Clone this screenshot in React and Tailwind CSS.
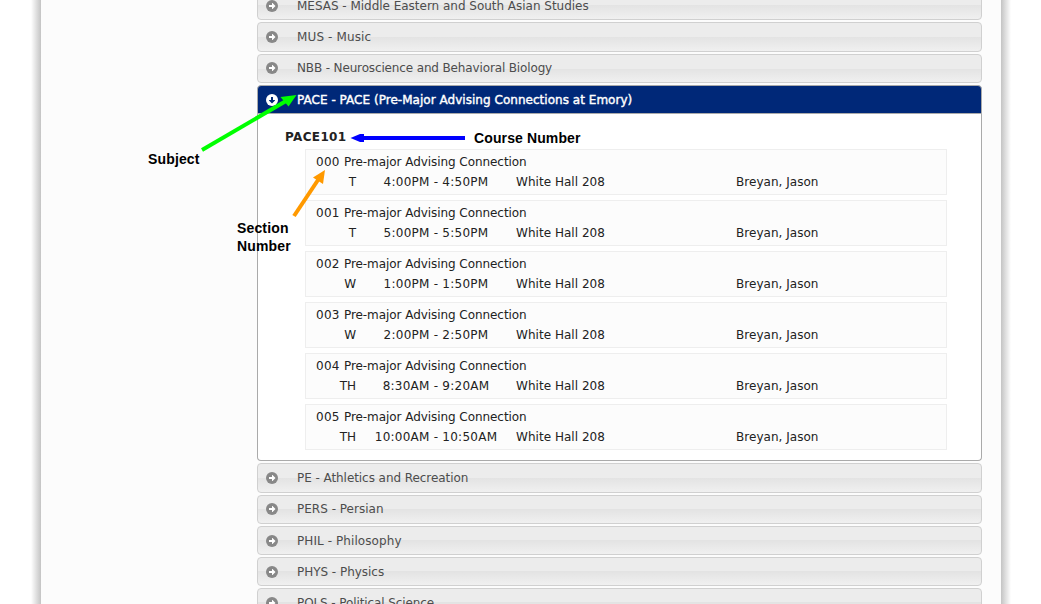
const before = [
  { name: "MESAS - Middle Eastern and South Asian Studies", size: "h-[30px] pt-[2px]", tracking: "tracking-[-0.02px]" },
  { name: "MUS - Music", size: "h-[30px]", tracking: "tracking-[0.12px]" },
  { name: "NBB - Neuroscience and Behavioral Biology", size: "h-[29px] pb-px", tracking: "tracking-[-0.14px]" },
];

const after = [
  { name: "PE - Athletics and Recreation", size: "h-[30px]", tracking: "tracking-[-0.06px]" },
  { name: "PERS - Persian", size: "h-[29px] pb-px", tracking: "tracking-[0.01px]" },
  { name: "PHIL - Philosophy", size: "h-[29px]", tracking: "tracking-[0.08px]" },
  { name: "PHYS - Physics", size: "h-[29px]", tracking: "tracking-[-0.03px]" },
  { name: "POLS - Political Science", size: "h-[29px]", tracking: "tracking-[-0.1px]" },
];

const sections = [
  { number: "000", day: "T", time: "4:00PM - 4:50PM" },
  { number: "001", day: "T", time: "5:00PM - 5:50PM" },
  { number: "002", day: "W", time: "1:00PM - 1:50PM" },
  { number: "003", day: "W", time: "2:00PM - 2:50PM" },
  { number: "004", day: "TH", time: "8:30AM - 9:20AM" },
  { number: "005", day: "TH", time: "10:00AM - 10:50AM" },
];

function CircleArrow({ down = false }) {
  return (
    <svg width="12" height="12" viewBox="0 0 12 12" className={down ? "shrink-0 rotate-90" : "shrink-0"}>
      <circle cx="6" cy="6" r="6" fill={down ? "#ffffff" : "#888888"} />
      <path d="M3 5h3V3h.5l3 3-3 3H6V7H3z" fill={down ? "#002878" : "#ffffff"} />
    </svg>
  );
}

function SubjectRow({ name, size, tracking }) {
  return (
    <div
      className={`${size} flex shrink-0 items-center rounded-[4px] border border-[#d0d0d0] bg-[linear-gradient(to_bottom,#ececec_0%,#ececec_50%,#e3e3e3_50%,#f0f0f0_100%)] pl-2`}
    >
      <CircleArrow />
      <span className={`${tracking} ml-[19px] text-[12px] leading-4 text-[#4d4d4d]`}>{name}</span>
    </div>
  );
}

function Section({ number, day, time }) {
  return (
    <div className="h-[46px] border border-[#eeeeee] bg-[#fcfcfc] pt-[2px] text-[12px] leading-5 text-[#222222]">
      <div className="pl-[10px] tracking-[-0.06px]">
        <span className="tracking-[0.3px]">{number} </span>
        Pre-major Advising Connection
      </div>
      <div className="flex">
        <div className="w-[50px] text-right">{day}</div>
        <div className="ml-[10px] w-[140px] text-center tracking-[0.25px]">{time}</div>
        <div className="ml-[10px] w-[220px] tracking-[0.03px]">White Hall 208</div>
        <div className="tracking-[0.03px]">Breyan, Jason</div>
      </div>
    </div>
  );
}

export default function App() {
  return (
    <div className="relative flex h-[604px] w-[1041px] overflow-hidden bg-white font-['DejaVu_Sans',Verdana,sans-serif]">
      <div className="w-[31px] shrink-0" />
      <div className="w-[10px] shrink-0 bg-linear-to-r from-white to-[#c4c4c4]" />
      <main className="w-[960px] shrink-0 bg-[#fcfcfc] pl-[216px]">
        <div className="-mt-[10px] flex w-[725px] flex-col gap-[2px]">
          {before.map((s) => (
            <SubjectRow key={s.name} {...s} />
          ))}
          <section className="h-[376px] shrink-0">
            <div className="flex h-[29px] items-center rounded-t-[4px] border border-[#aaaaaa] bg-[#002878] pl-2">
              <CircleArrow down />
              <span className="ml-[19px] text-[12px] leading-4 tracking-[0.03px] text-white [-webkit-text-stroke:0.4px_white]">
                PACE - PACE (Pre-Major Advising Connections at Emory)
              </span>
            </div>
            <div className="h-[347px] rounded-b-[4px] border border-t-0 border-[#aaaaaa] bg-white pt-[13px] pl-[27px]">
              <h2 className="h-[22px] text-[12px] leading-5 font-bold tracking-[0.35px] text-[#222222]">PACE101</h2>
              <div className="ml-[20px] flex w-[642px] flex-col gap-[5px]">
                {sections.map((s) => (
                  <Section key={s.number} {...s} />
                ))}
              </div>
            </div>
          </section>
          {after.map((s) => (
            <SubjectRow key={s.name} {...s} />
          ))}
        </div>
      </main>
      <div className="w-[10px] shrink-0 bg-linear-to-r from-[#c4c4c4] to-white" />

      <svg className="absolute inset-0" width="1041" height="604" viewBox="0 0 1041 604">
        <path d="M202 150L286 101" stroke="#00ff00" strokeWidth="4" />
        <path d="M296.500 95L288.500 106.500L280.500 97z" fill="#00ff00" />
        <path d="M465 138H360" stroke="#0000ff" strokeWidth="4" />
        <path d="M350.500 138L360 134H364V142H360z" fill="#0000ff" />
        <path d="M294 216L320 177" stroke="#ff9900" strokeWidth="4" />
        <path d="M325 170L323 184L313 177.500z" fill="#ff9900" />
      </svg>
      <div className="absolute top-[150px] left-[148px] font-['Liberation_Sans',Arial,sans-serif] text-[14px] leading-[18px] font-bold tracking-[0.15px] text-black">
        Subject
      </div>
      <div className="absolute top-[129px] left-[474px] font-['Liberation_Sans',Arial,sans-serif] text-[14px] leading-[18px] font-bold tracking-[0.12px] text-black">
        Course Number
      </div>
      <div className="absolute top-[219px] left-[237px] font-['Liberation_Sans',Arial,sans-serif] text-[14px] leading-[18px] font-bold tracking-[0.15px] text-black">
        Section
        <br />
        Number
      </div>
    </div>
  );
}
